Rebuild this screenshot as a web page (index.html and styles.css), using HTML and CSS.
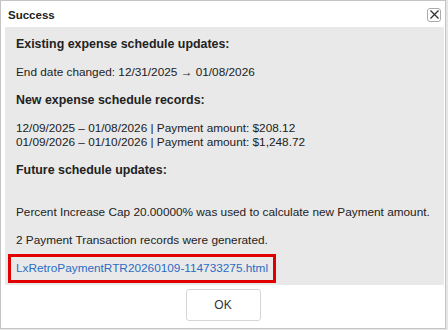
FILE: index.html
```html
<!DOCTYPE html>
<html>
<head>
<meta charset="utf-8">
<link rel="stylesheet" href="styles.css">
</head>
<body>
<div class="dialog">
  <div class="titlebar">
    <span class="title">Success</span>
    <button class="close" aria-label="Close">
      <svg width="9" height="9" viewBox="0 0 9 9"><path d="M0.5 0.5 L8.5 8.5 M8.5 0.5 L0.5 8.5" stroke="#333" stroke-width="1.3" fill="none"/></svg>
    </button>
  </div>
  <div class="content">
    <p class="heading">Existing expense schedule updates:</p>
    <p>End date changed: 12/31/2025 → 01/08/2026</p>
    <p class="heading">New expense schedule records:</p>
    <p>12/09/2025 – 01/08/2026 | Payment amount: $208.12<br>01/09/2026 – 01/10/2026 | Payment amount: $1,248.72</p>
    <p class="heading">Future schedule updates:</p>
    <p class="empty"></p>
    <p>Percent Increase Cap 20.00000% was used to calculate new Payment amount.</p>
    <p>2 Payment Transaction records were generated.</p>
    <div class="linkbox"><a class="link" href="#">LxRetroPaymentRTR20260109-114733275.html</a></div>
  </div>
  <div class="footer">
    <button class="ok">OK</button>
  </div>
</div>
</body>
</html>
```
FILE: styles.css
```css
html, body {
  margin: 0;
  padding: 0;
  background: #e6e6e6;
}
body {
  width: 448px;
  height: 330px;
  font-family: "Liberation Sans", Arial, sans-serif;
  font-size: 11.8px;
  color: #222;
}
.dialog {
  box-sizing: border-box;
  width: 446px;
  height: 329px;
  background: #fff;
  border: 1px solid #c4c4c4;
  display: flex;
  flex-direction: column;
}
.titlebar {
  flex-shrink: 0;
  height: 26px;
  display: flex;
  align-items: center;
  justify-content: space-between;
  padding: 0 4px 0 7px;
}
.title {
  font-weight: bold;
  font-size: 11.5px;
  color: #222;
  margin-top: 1px;
}
.close {
  box-sizing: border-box;
  width: 14px;
  height: 14px;
  padding: 0;
  margin: 1px 0 0 0;
  border: 1px solid #aaa;
  border-radius: 3px;
  background: #fff;
  display: flex;
  align-items: center;
  justify-content: center;
}
.content {
  flex-shrink: 0;
  background: #e9e9e9;
  margin: 0 1px 0 4px;
  padding: 10px 11px 2px 11px;
  white-space: nowrap;
}
.content p {
  margin: 0 0 14px 0;
  line-height: 14px;
}
.content p.heading {
  font-weight: bold;
  font-size: 12.4px;
}
.content p.empty {
  height: 14px;
  margin: 0;
}
.linkbox {
  display: inline-block;
  border: 3px solid #e00000;
  margin-left: -8px;
  margin-top: -7px;
  padding: 4px 5px 5px 5px;
  line-height: 14px;
  vertical-align: top;
}
.link {
  color: #2b6cc4;
  text-decoration: none;
}
.footer {
  flex: 1;
  display: flex;
  justify-content: center;
  padding-top: 4px;
}
.ok {
  box-sizing: border-box;
  width: 75px;
  height: 32px;
  background: #fff;
  border: 1px solid #d6d6d6;
  border-radius: 3px;
  font-family: "Liberation Sans", Arial, sans-serif;
  font-size: 12px;
  color: #333;
}
```
